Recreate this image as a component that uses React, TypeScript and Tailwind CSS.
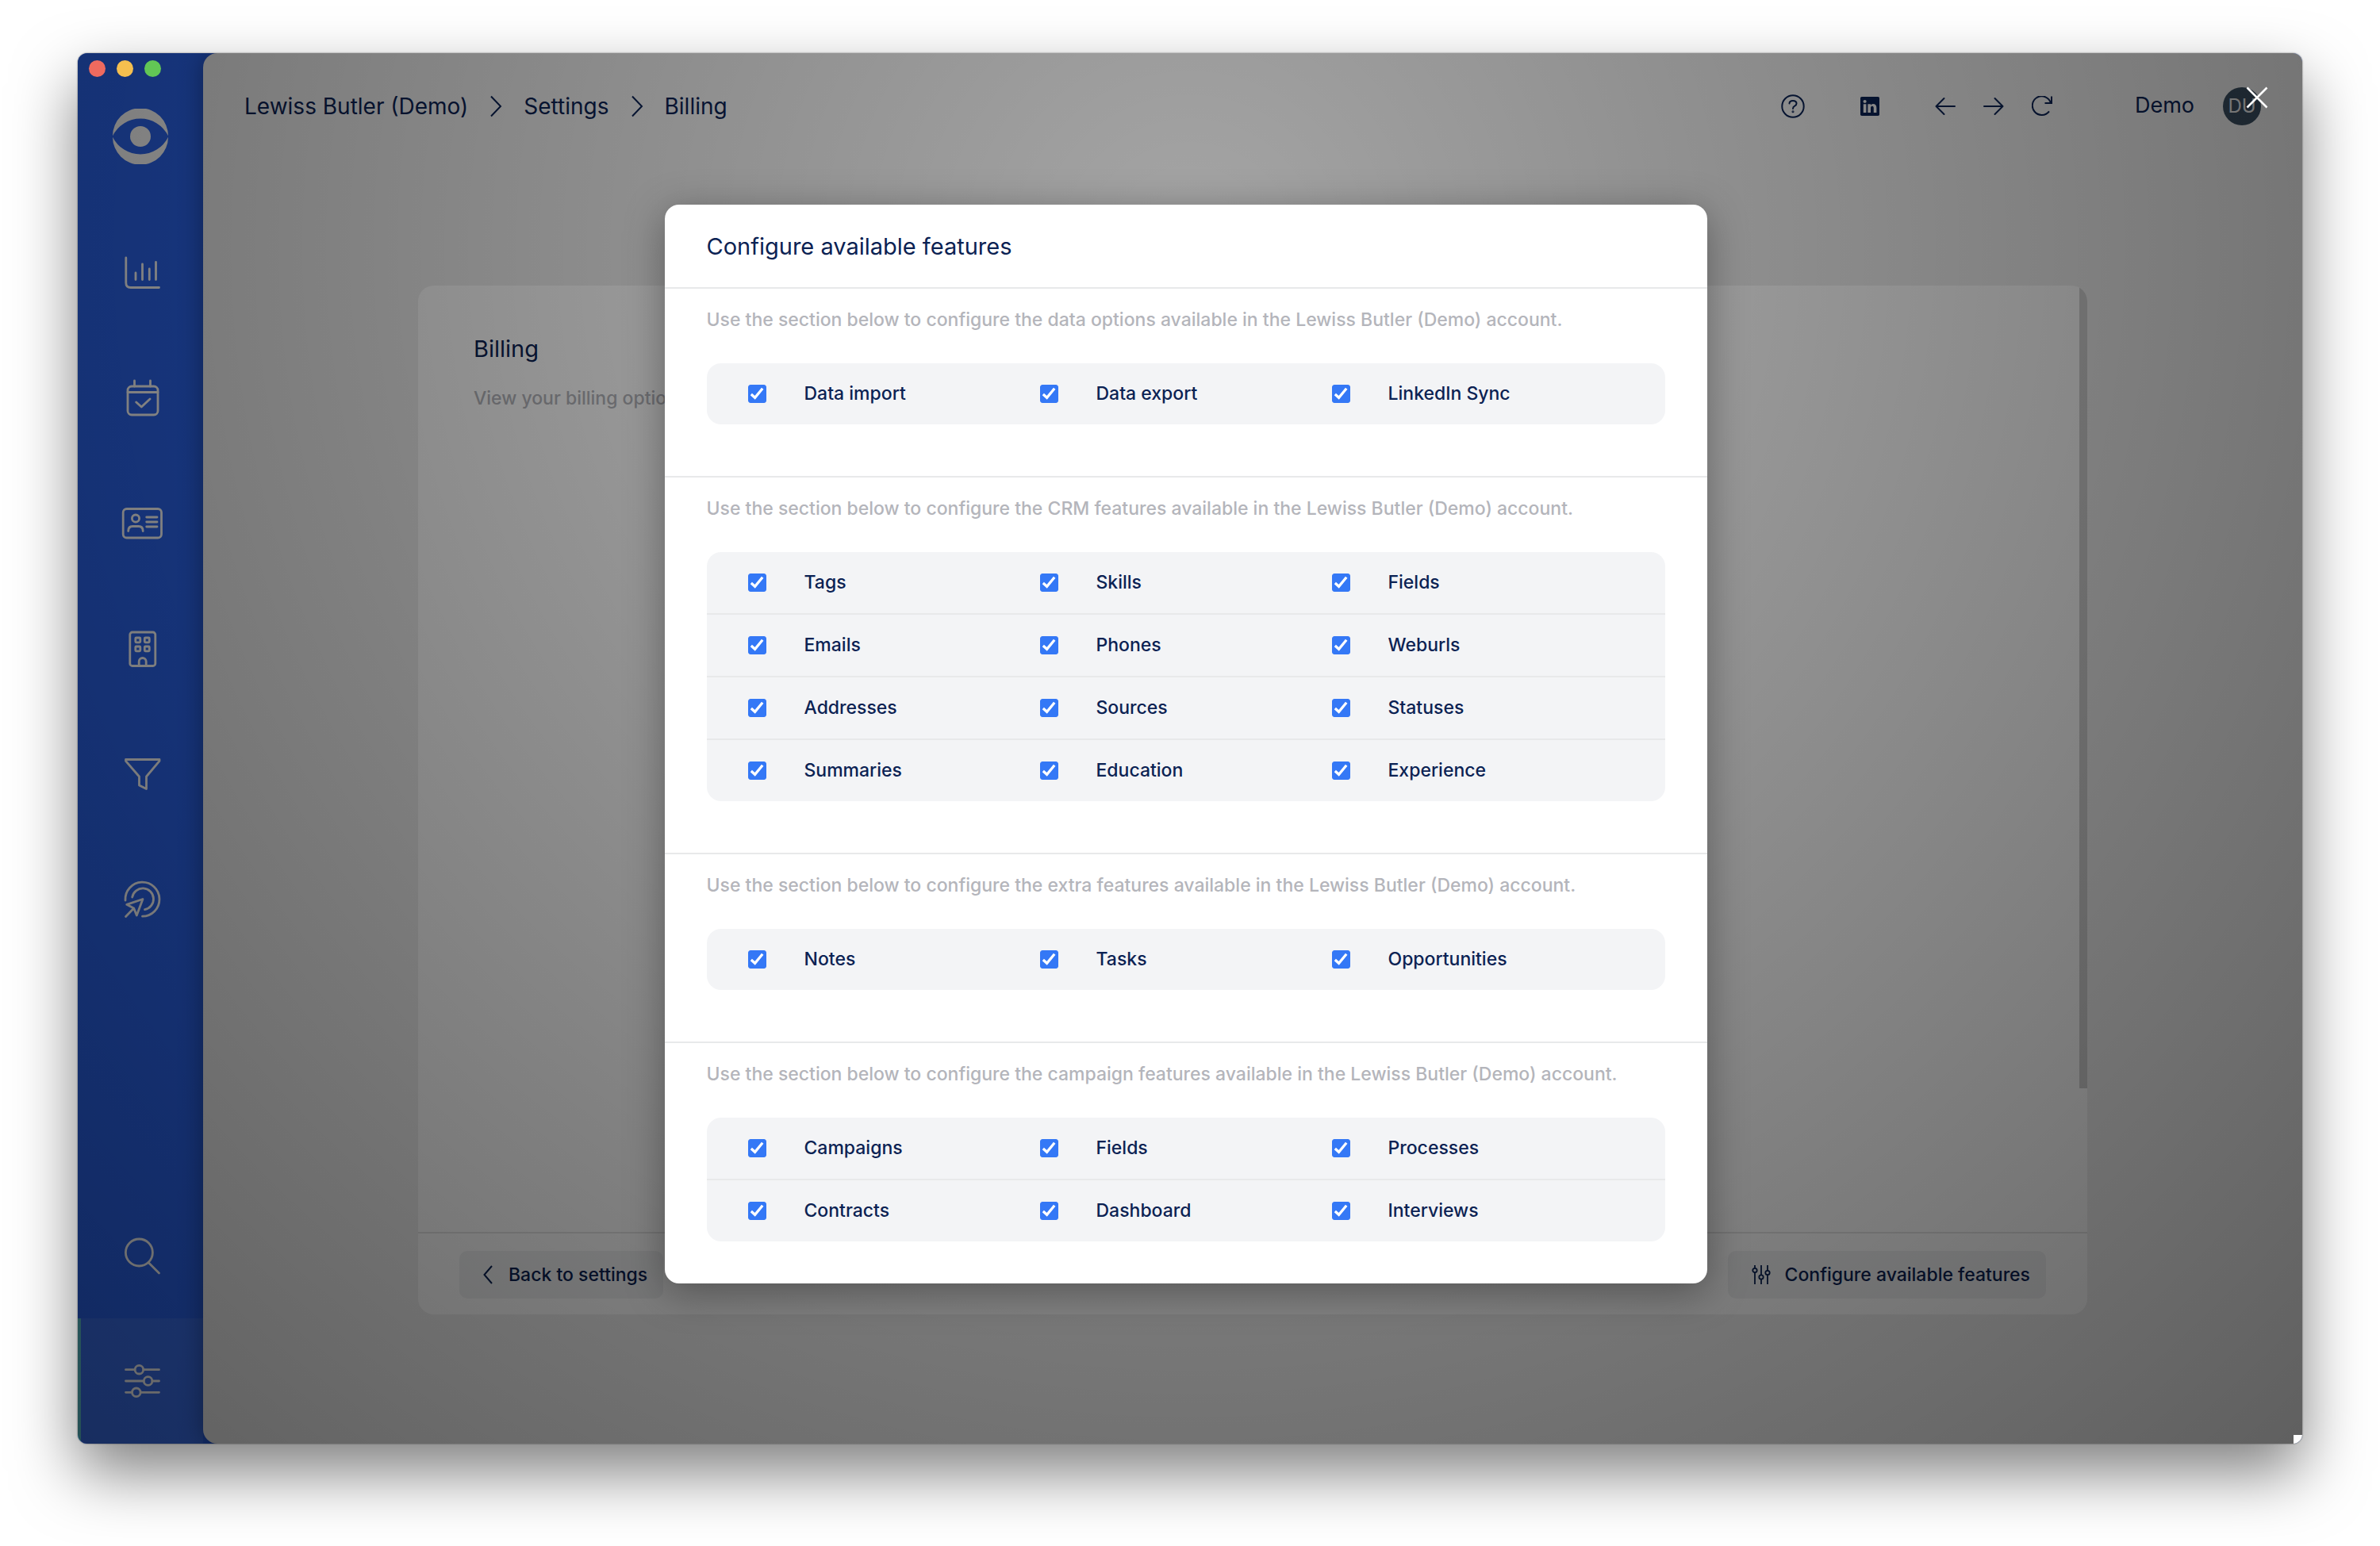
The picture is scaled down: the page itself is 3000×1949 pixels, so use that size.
import { useState } from "react";
import type { ReactNode } from "react";
import { BsLinkedin } from "react-icons/bs";

type Section = {
  topic: string;
  rows: string[][];
};

const ACCOUNT = "Lewiss Butler (Demo)";

const sections: Section[] = [
  { topic: "data options", rows: [["Data import", "Data export", "LinkedIn Sync"]] },
  {
    topic: "CRM features",
    rows: [
      ["Tags", "Skills", "Fields"],
      ["Emails", "Phones", "Weburls"],
      ["Addresses", "Sources", "Statuses"],
      ["Summaries", "Education", "Experience"],
    ],
  },
  { topic: "extra features", rows: [["Notes", "Tasks", "Opportunities"]] },
  {
    topic: "campaign features",
    rows: [
      ["Campaigns", "Fields", "Processes"],
      ["Contracts", "Dashboard", "Interviews"],
    ],
  },
];

function NavIcon({ children }: { children: ReactNode }) {
  return (
    <svg viewBox="0 0 56 56" className="size-14" fill="none" stroke="currentColor" strokeWidth="2.8" strokeLinecap="round" strokeLinejoin="round">
      {children}
    </svg>
  );
}

const navItems = [
  {
    label: "Dashboard",
    icon: (
      <NavIcon>
        <path d="M7.8 9v31.500q0 6 6 6H49.500M20 28v8.500M28.500 17v19.500M37.300 23v13.500M45.500 14.500v22" />
      </NavIcon>
    ),
  },
  {
    label: "Tasks",
    icon: (
      <NavIcon>
        <rect x="10" y="13" width="38" height="36" rx="5" />
        <path d="M10 20.500h38M18.500 6v7M38.500 6v7M20.700 33l6.600 6 10.700-10" />
      </NavIcon>
    ),
  },
  {
    label: "People",
    icon: (
      <NavIcon>
        <rect x="4.200" y="9.500" width="48.300" height="36.500" rx="4.500" />
        <circle cx="20" cy="21.600" r="4.600" />
        <path d="M10.700 37.500q0-6 5.500-6h7.500q5.500 0 5.500 6M33.700 20H47M33.700 26H47M33.700 32H47" />
      </NavIcon>
    ),
  },
  {
    label: "Companies",
    icon: (
      <NavIcon>
        <rect x="12.800" y="7" width="32" height="42.500" rx="3" />
        <rect x="19.800" y="14" width="6" height="5.800" rx="1" />
        <rect x="31.300" y="14" width="6" height="5.800" rx="1" />
        <rect x="19.800" y="25" width="6" height="5.800" rx="1" />
        <rect x="31.300" y="25" width="6" height="5.800" rx="1" />
        <path d="M24.200 49v-5a4.500 4.500 0 0 1 9 0v5" />
      </NavIcon>
    ),
  },
  {
    label: "Filters",
    icon: (
      <NavIcon>
        <path d="M7.500 9.500H50v1.800L33.500 31v15.500L24.500 42V31L7.500 11.300z" />
      </NavIcon>
    ),
  },
  {
    label: "Campaigns",
    icon: (
      <NavIcon>
        <path d="M7 29A21.500 21.500 0 1 1 28.500 49.200M15.700 25A13.500 13.500 0 1 1 31.500 40.700" />
        <path d="M29 27.500L8.700 34.300l9 4.700 3.600 9zM17.700 39L7.500 49.500" />
      </NavIcon>
    ),
  },
];

function Logo() {
  return (
    <svg viewBox="0 0 70 70" className="size-[70px] text-white" fill="currentColor">
      <path d="M0 34.300A35 35 0 0 1 70 34.300A39 39 0 0 0 0 34.300z" />
      <path d="M0 35.700A35 35 0 0 0 70 35.700A39 39 0 0 1 0 35.700z" />
      <circle cx="35" cy="35" r="13" />
    </svg>
  );
}

function Chevron() {
  return (
    <svg viewBox="0 0 16 28" className="h-7 w-4" fill="none" stroke="currentColor" strokeWidth="2">
      <path d="M2 1.500L14 14 2 26.500" />
    </svg>
  );
}

function Sidebar() {
  return (
    <nav className="flex w-[158px] shrink-0 flex-col text-white">
      <div className="flex h-[198px] items-center justify-center pt-3">
        <Logo />
      </div>
      {navItems.map((item) => (
        <button key={item.label} type="button" aria-label={item.label} className="flex h-[158px] items-center justify-center border-l-4 border-transparent">
          {item.icon}
        </button>
      ))}
      <button type="button" aria-label="Search" className="mt-auto flex h-[158px] items-center justify-center border-l-4 border-transparent">
        <NavIcon>
          <circle cx="24.400" cy="24" r="17" />
          <path d="M36.500 37L49.500 50" />
        </NavIcon>
      </button>
      <button type="button" aria-label="Settings" className="flex h-[158px] items-center justify-center border-l-4 border-[#5cc8d4] bg-white/8">
        <NavIcon>
          <path d="M7.500 13.700h11.400M30 13.700h19.500M7.500 28h22.600M41 28h8.500M7.500 42.300h7.800M26.300 42.300h23.200" />
          <circle cx="24.400" cy="13.700" r="5.300" />
          <circle cx="35.600" cy="28" r="5.300" />
          <circle cx="20.800" cy="42.300" r="5.300" />
        </NavIcon>
      </button>
    </nav>
  );
}

function TopBar() {
  return (
    <header className="flex h-[133px] items-center px-[52px] text-[28px]">
      <div className="flex items-center gap-[27px]">
        <a href="#account">{ACCOUNT}</a>
        <Chevron />
        <a href="#settings">Settings</a>
        <Chevron />
        <span>Billing</span>
      </div>

      <div className="ml-auto flex items-center">
        <button type="button" aria-label="Help" className="mr-[70px]">
          <svg viewBox="0 0 30 30" className="size-[30px]" fill="none" stroke="currentColor" strokeWidth="2" strokeLinecap="round">
            <circle cx="15" cy="15" r="13.700" />
            <path d="M10.500 11.500q0-3.500 4.500-3.500t4.500 3.500q0 2-2.300 3.200Q15 15.900 15 18" />
            <circle cx="15" cy="21.700" r=".5" />
          </svg>
        </button>
        <a href="#linkedin" aria-label="LinkedIn" className="mr-[70px]">
          <BsLinkedin className="size-6" />
        </a>
        <button type="button" aria-label="Back" className="mr-[35px]">
          <svg viewBox="0 0 26 24" className="h-6 w-[26px]" fill="none" stroke="currentColor" strokeWidth="2" strokeLinecap="round" strokeLinejoin="round">
            <path d="M25 12H1.500M11.500 2l-10 10 10 10" />
          </svg>
        </button>
        <button type="button" aria-label="Forward" className="mr-[35px]">
          <svg viewBox="0 0 26 24" className="h-6 w-[26px]" fill="none" stroke="currentColor" strokeWidth="2" strokeLinecap="round" strokeLinejoin="round">
            <path d="M1 12h23.500M14.500 2l10 10-10 10" />
          </svg>
        </button>
        <button type="button" aria-label="Reload" className="mr-[104px]">
          <svg viewBox="0 0 26 26" className="size-[26px]" fill="none" stroke="currentColor" strokeWidth="2">
            <path d="M24 9A11.800 11.800 0 1 0 22 19.300M25 .5V9h-8.500" />
          </svg>
        </button>
        <span className="text-[27px]">Demo</span>
        <span className="ml-9 flex size-12 items-center justify-center rounded-full bg-[#3a4e60] text-2xl text-[#e8e8e8]">DU</span>
      </div>
    </header>
  );
}

function BillingCard() {
  return (
    <main className="relative mx-[271px] mt-40 mb-[163px] flex flex-1 flex-col overflow-hidden rounded-[20px] bg-white">
      <div className="flex-1 px-[70px] pt-[60px]">
        <h1 className="text-[29px] leading-10">Billing</h1>
        <p className="mt-6 text-[23px] leading-9 font-[450] text-[#b4b5bb]">View your billing options.</p>
      </div>
      <div className="absolute top-0 right-0 h-[78%] w-[10px] bg-[#d0d0d0]" />
      <footer className="flex items-center justify-between border-t-2 border-[#e6e6e6] px-[52px] pt-[22px] pb-5 text-[23px] font-[450]">
        <button type="button" className="flex h-[60px] items-center gap-5 rounded-[10px] bg-[#f1f2f3] pr-5 pl-[30px]">
          <svg viewBox="0 0 12 24" className="h-6 w-3" fill="none" stroke="currentColor" strokeWidth="2">
            <path d="M11 1L1.500 12 11 23" />
          </svg>
          Back to settings
        </button>
        <button type="button" className="flex h-[60px] items-center gap-[18px] rounded-[10px] bg-[#f1f2f3] pr-5 pl-[30px]">
          <svg viewBox="0 0 24 26" className="h-[26px] w-6" fill="none" stroke="currentColor" strokeWidth="1.800">
            <path d="M4 1v4M4 10v15M12 1v12M12 19v6M20 1v7M20 13v12" />
            <circle cx="4" cy="7.500" r="2.700" />
            <circle cx="12" cy="16" r="2.700" />
            <circle cx="20" cy="10.500" r="2.700" />
          </svg>
          Configure available features
        </button>
      </footer>
    </main>
  );
}

function FeatureCheckbox({ label }: { label: string }) {
  const [checked, setChecked] = useState(true);

  return (
    <label className="flex items-center gap-12">
      <span className="relative flex size-[23px]">
        <input
          type="checkbox"
          checked={checked}
          onChange={(e) => setChecked(e.target.checked)}
          className="size-[23px] appearance-none rounded-[3px] border border-[#b4b5bb] bg-white checked:border-[#3478f6] checked:bg-[#3478f6]"
        />
        {checked && (
          <svg viewBox="0 0 24 24" className="pointer-events-none absolute inset-0 size-[23px]" fill="none" stroke="white" strokeWidth="3.400">
            <path d="M4 12.500l5 4.500L19 5" />
          </svg>
        )}
      </span>
      {label}
    </label>
  );
}

function FeaturesDialog() {
  return (
    <div role="dialog" aria-label="Configure available features" className="w-full max-w-[1314px] rounded-[18px] bg-white shadow-[0_10px_50px_rgba(0,0,0,0.35)]">
      <h2 className="px-[53px] pt-[33px] pb-[31px] text-[29px] leading-10">Configure available features</h2>
      {sections.map((section) => (
        <section key={section.topic} className="border-t-2 border-[#e8e9ea] px-[53px] pt-[19px] pb-[65px] last:pb-[53px]">
          <p className="text-[23px] leading-10 font-[450] text-[#b4b5bb]">
            Use the section below to configure the {section.topic} available in the {ACCOUNT} account.
          </p>
          <div className="mt-[35px] divide-y-2 divide-[#e8e9ea] rounded-[18px] bg-[#f3f4f6] text-[23px] font-[450]">
            {section.rows.map((row) => (
              <div key={row[0]} className="box-content grid h-[77px] grid-cols-3 px-[52px]">
                {row.map((label) => (
                  <FeatureCheckbox key={label} label={label} />
                ))}
              </div>
            ))}
          </div>
        </section>
      ))}
    </div>
  );
}

export default function App() {
  return (
    <div className="flex min-h-screen bg-white px-[98px] pt-[67px] pb-[129px] font-['Inter','Liberation_Sans',sans-serif] text-[#0b2253]">
      <div className="relative flex flex-1 overflow-hidden rounded-xl bg-[#2b65ee] shadow-[0_0_2px_rgba(0,0,0,0.6),0_36px_80px_rgba(0,0,0,0.5)]">
        <Sidebar />
        <div className="flex flex-1 flex-col rounded-l-[18px] bg-[#efefef] shadow-[0_0_30px_rgba(0,0,0,0.35)]">
          <TopBar />
          <BillingCard />
        </div>

        <div className="absolute inset-0 flex items-center justify-center bg-[radial-gradient(circle_at_50%_14%,rgba(0,0,0,0.31)_0px,rgba(0,0,0,0.485)_1260px,rgba(0,0,0,0.6)_2060px)] pr-[11px] pb-[11px]">
          <FeaturesDialog />
          <button type="button" aria-label="Close" className="absolute top-[42px] right-[43px] text-white">
            <svg viewBox="0 0 28 28" className="size-7" fill="none" stroke="currentColor" strokeWidth="2.500">
              <path d="M1.500 1.500l25 25M26.500 1.500l-25 25" />
            </svg>
          </button>
          <span className="absolute right-0 bottom-0 size-[11px] bg-white" />
        </div>

        {/* Window controls */}
        <div className="absolute top-[9px] left-[14px] flex gap-[14px]">
          <span className="size-[21px] rounded-full bg-[#ee6a5f]" />
          <span className="size-[21px] rounded-full bg-[#f5bf4f]" />
          <span className="size-[21px] rounded-full bg-[#62c655]" />
        </div>
      </div>
    </div>
  );
}
